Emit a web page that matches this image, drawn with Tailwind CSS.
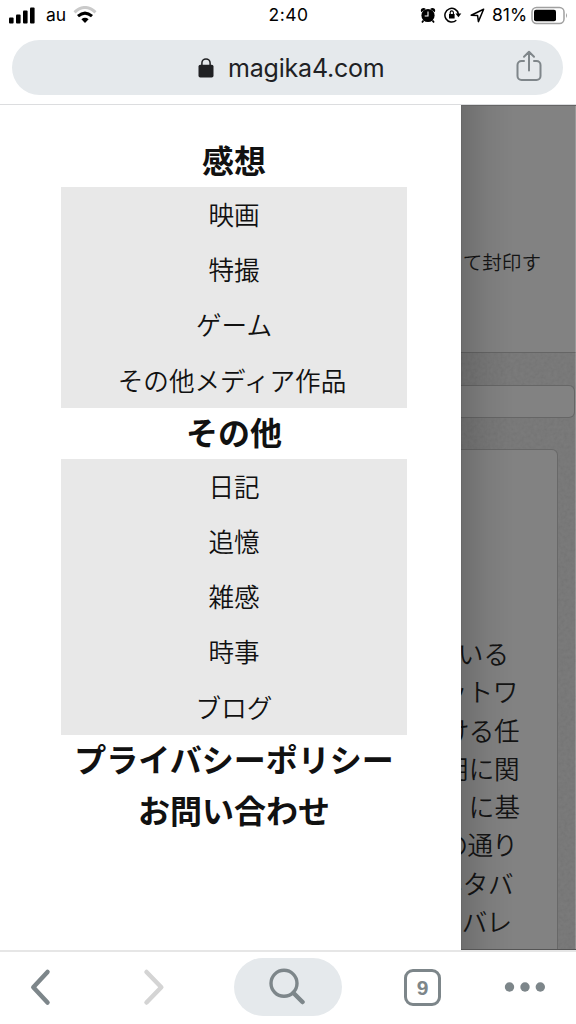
<!DOCTYPE html>
<html lang="ja">
<head>
<meta charset="utf-8">
<title>magika4.com</title>
<script src="https://cdn.jsdelivr.net/npm/@tailwindcss/browser@4"></script>
</head>
<body class="w-[576px] h-[1024px] overflow-hidden bg-white font-['Inter','Noto_Sans_CJK_JP',sans-serif] text-black flex flex-col">
  <!-- Status bar -->
  <header class="h-[105px] shrink-0 border-b border-[#dcdddf]">
    <div class="h-10 grid grid-cols-3 pl-[9px] pr-[8px]">
      <div class="flex h-[31px] items-center">
        <svg class="w-[26px] h-[17px] -mt-px" viewBox="0 0 26 17"><rect x="0" y="10.5" width="4.6" height="6" rx="1"/><rect x="7" y="7.5" width="4.6" height="9" rx="1"/><rect x="14" y="3.5" width="4.6" height="13" rx="1"/><rect x="21" y="0.5" width="4.6" height="16" rx="1"/></svg>
        <span class="ml-[11px] w-[21px] text-[17.5px] leading-[18px] -mt-px">au</span>
        <svg class="ml-[6px] w-[24px] h-[18px] -mt-px" viewBox="0 0 24 18" fill="none"><path d="M1.5 6.3Q12-3.3 22.5 6.3" stroke="#cacaca" stroke-width="3"/><path d="M5 10.2Q12 4 19 10.2" stroke="#000" stroke-width="3"/><path d="M8.4 13.2Q12 10.4 15.6 13.2L12 17Z" fill="#000"/></svg>
      </div>
      <div class="flex h-[30px] items-center justify-center text-[17.5px] tracking-[0.5px] leading-none">2:40</div>
      <div class="flex h-[31px] items-center justify-end">
        <svg class="w-[16px] h-[17px] mr-[8px] -mt-px" viewBox="0 0 16 17"><circle cx="8" cy="8.5" r="6.6"/><path d="M1.2 5.2Q0 2 2.5 1.2Q4.4.6 5.8 2ZM14.8 5.2Q16 2 13.5 1.2Q11.6.6 10.2 2Z"/><path d="M3.5 13.5 2 15.6M12.5 13.5 14 15.6" stroke="#000" stroke-width="1.7"/><path d="M8 4.500V9H4.700" fill="none" stroke="#fff" stroke-width="1.1"/></svg>
        <svg class="w-[18px] h-[16px] mr-[8px] -mt-px" viewBox="0 0 18 16" fill="none" stroke="#000" stroke-width="1.5"><path d="M12.3 13.2A6.800 6.800 0 1 1 14.4 7"/><path d="M11.5 6.5H17.3L14.4 10.2Z" fill="#000" stroke="none"/><rect x="5" y="7" width="5.6" height="4.5" fill="#000" stroke="none"/><path d="M6.2 7V5.5a1.6 1.6 0 0 1 3.2 0V7" stroke-width="1.1"/></svg>
        <svg class="w-[15px] h-[15px] mr-[7px]" viewBox="0 0 15 15" fill="none" stroke="#000" stroke-width="1.5" stroke-linejoin="round"><path d="M1.2 7.2 13.6 1.2 8.4 13.6 7.6 7.6Z"/></svg>
        <span class="text-[17.5px] leading-[18px] w-[36px] -mt-px whitespace-nowrap">81%</span>
        <svg class="w-[37px] h-[19px] ml-[3px] -mt-px" viewBox="0 0 37 19"><rect x="1" y="1.5" width="32" height="16" rx="4.5" fill="none" stroke="#a0a0a0" stroke-width="1.5"/><rect x="3" y="3.7" width="22" height="11.6" rx="2"/><path d="M35 7Q37 9.5 35 12Z" fill="#a0a0a0"/></svg>
      </div>
    </div>
    <!-- Address bar -->
    <div class="ml-[12px] w-[551px] h-[55px] rounded-full bg-[#e5e9ec] grid grid-cols-[1fr_auto_1fr] items-center text-[#202124]">
      <span></span>
      <div class="flex items-center ml-[7px]">
        <svg class="w-[16px] h-[20px] mr-[14px]" viewBox="0 0 16 20"><rect x="0.5" y="6.8" width="15" height="12.7" rx="1.8" fill="#202124"/><path d="M3.9 7.500V5a4.1 4.1 0 0 1 8.2 0V7.500" fill="none" stroke="#202124" stroke-width="1.5"/></svg>
        <span class="text-[25px] leading-[28px] w-[156px] mt-px tracking-[-0.2px] whitespace-nowrap">magika4.com</span>
      </div>
      <svg class="justify-self-end mr-[21px] mb-[3px] w-[26px] h-[32px]" viewBox="0 0 26 32" fill="none" stroke="#7f868a" stroke-width="2" stroke-linecap="round" stroke-linejoin="round"><path d="M8 11H5.500A4 4 0 0 0 1.500 15V26A4 4 0 0 0 5.500 30H20.500A4 4 0 0 0 24.500 26V15A4 4 0 0 0 20.500 11H18M13 20.500V2M8 6.700 13 1.800 18 6.700"/></svg>
    </div>
  </header>

  <main class="h-[845px] shrink-0 flex font-['Noto_Sans_CJK_JP',sans-serif]">
    <!-- Menu drawer -->
    <nav class="w-[461px] shrink-0 pl-[61px] pt-[31px] text-center text-[#111]">
      <div class="w-[346px]">
        <h2 class="h-[51px] leading-[47px] text-[32px] font-bold">感想</h2>
        <ul class="bg-[#e8e8e8] text-[25.6px] leading-[53.2px] font-[350] *:pb-[2px]">
          <li>映画</li><li>特撮</li><li>ゲーム</li><li class="-translate-x-[2px]">その他メディア作品</li>
        </ul>
        <h2 class="h-[51px] leading-[47px] text-[32px] font-bold">その他</h2>
        <ul class="bg-[#e8e8e8] text-[25.6px] leading-[53.2px] font-[350] *:pb-[2px]">
          <li>日記</li><li>追憶</li><li>雑感</li><li>時事</li><li>ブログ</li>
        </ul>
        <h2 class="h-[51px] leading-[47px] text-[32px] font-bold whitespace-nowrap">プライバシーポリシー</h2>
        <h2 class="h-[51px] leading-[47px] text-[32px] font-bold">お問い合わせ</h2>
      </div>
    </nav>
    <!-- Dimmed page -->
    <section class="relative w-[115px] h-[845px] overflow-hidden bg-[#757575] text-[#141414] font-[350] border-y border-t-[#656565] border-b-[#555]">
      <svg class="absolute inset-0 w-full h-full opacity-5"><filter id="grain"><feTurbulence type="fractalNoise" baseFrequency="0.3" numOctaves="2" seed="4"/><feColorMatrix type="matrix" values="1 0 0 0 0 1 0 0 0 0 1 0 0 0 0 0 0 0 0 1"/></filter><rect width="100%" height="100%" filter="url(#grain)"/></svg>
      <div class="relative h-[247px] bg-[#828282] border-b border-[#656565] pt-[138px] text-[19.6px] leading-[36px] flex justify-end pr-[35px] whitespace-nowrap">て封印す</div>
      <div class="relative mt-[32px] w-[114px] h-[33px] bg-[#828282] border border-l-0 border-[#666] rounded-r-[6px]"></div>
      <div class="relative mt-[31px] w-[97px] h-[520px] bg-[#828282] border border-l-0 border-[#686868] rounded-tr-[6px] pt-[184px] text-[25.6px] leading-[38.3px] whitespace-nowrap">
        <p class="flex justify-end pr-[48px]">いる</p>
        <p class="flex justify-end pr-[39px] -tracking-[0.3px]">ットワ</p>
        <p class="flex justify-end pr-[38px] -tracking-[0.5px]">ける任</p>
        <p class="flex justify-end pr-[38px] -tracking-[0.5px]">用に関</p>
        <p class="flex justify-end pr-[37px]">に基</p>
        <p class="flex justify-end pr-[40px] -tracking-[0.8px]">の通り</p>
        <p class="flex justify-end pr-[44px] -tracking-[0.5px]">ネタバ</p>
        <p class="flex justify-end pr-[46px] -tracking-[1px]">バレ</p>
      </div>
      <div class="absolute inset-y-0 left-0 w-[52px] bg-linear-to-r from-black/15 via-black/5 to-transparent border-l border-black/20"></div>
      <div class="absolute inset-y-0 right-0 w-px bg-white/20"></div>
    </section>
  </main>

  <!-- Browser toolbar -->
  <footer class="h-[74px] shrink-0 border-t-2 border-[#e6e6e6] bg-white flex items-start pt-[6px] text-[#7d868a]">
    <svg class="ml-[29px] mt-[10px] w-[22px] h-[38px]" viewBox="0 0 22 38" fill="none" stroke="#7d868a" stroke-width="4.5" stroke-linecap="round" stroke-linejoin="round"><path d="M18.500 4 4.300 19.200 18.500 34.500"/></svg>
    <svg class="ml-[92px] mt-[10px] w-[22px] h-[38px]" viewBox="0 0 22 38" fill="none" stroke="#d4d4d4" stroke-width="4.5" stroke-linecap="round" stroke-linejoin="round"><path d="M3.500 4 18.300 19.200 3.500 34.500"/></svg>
    <div class="ml-[69px] w-[108px] h-[58px] rounded-full bg-[#e5e9ec] pt-[10px] pl-[35px]">
      <svg class="w-[36px] h-[38px]" viewBox="0 0 36 38" fill="none" stroke="#7d868a" stroke-linecap="round"><circle cx="15" cy="15.3" r="13" stroke-width="3.4"/><path d="M24.500 25 33.500 34" stroke-width="4.5"/></svg>
    </div>
    <div class="ml-[62px] mt-[11px] w-[37px] h-[37px] rounded-[9px] border-[3.5px] border-[#7d868a] flex items-center justify-center font-['Liberation_Sans',sans-serif] font-bold text-[21px] leading-none">9</div>
    <svg class="ml-[63px] mt-[24px] w-[42px] h-[10px]" viewBox="0 0 42 10" fill="#7d868a"><circle cx="5.5" cy="5" r="4.7"/><circle cx="21" cy="5" r="4.7"/><circle cx="36.3" cy="5" r="4.7"/></svg>
  </footer>
</body>
</html>
